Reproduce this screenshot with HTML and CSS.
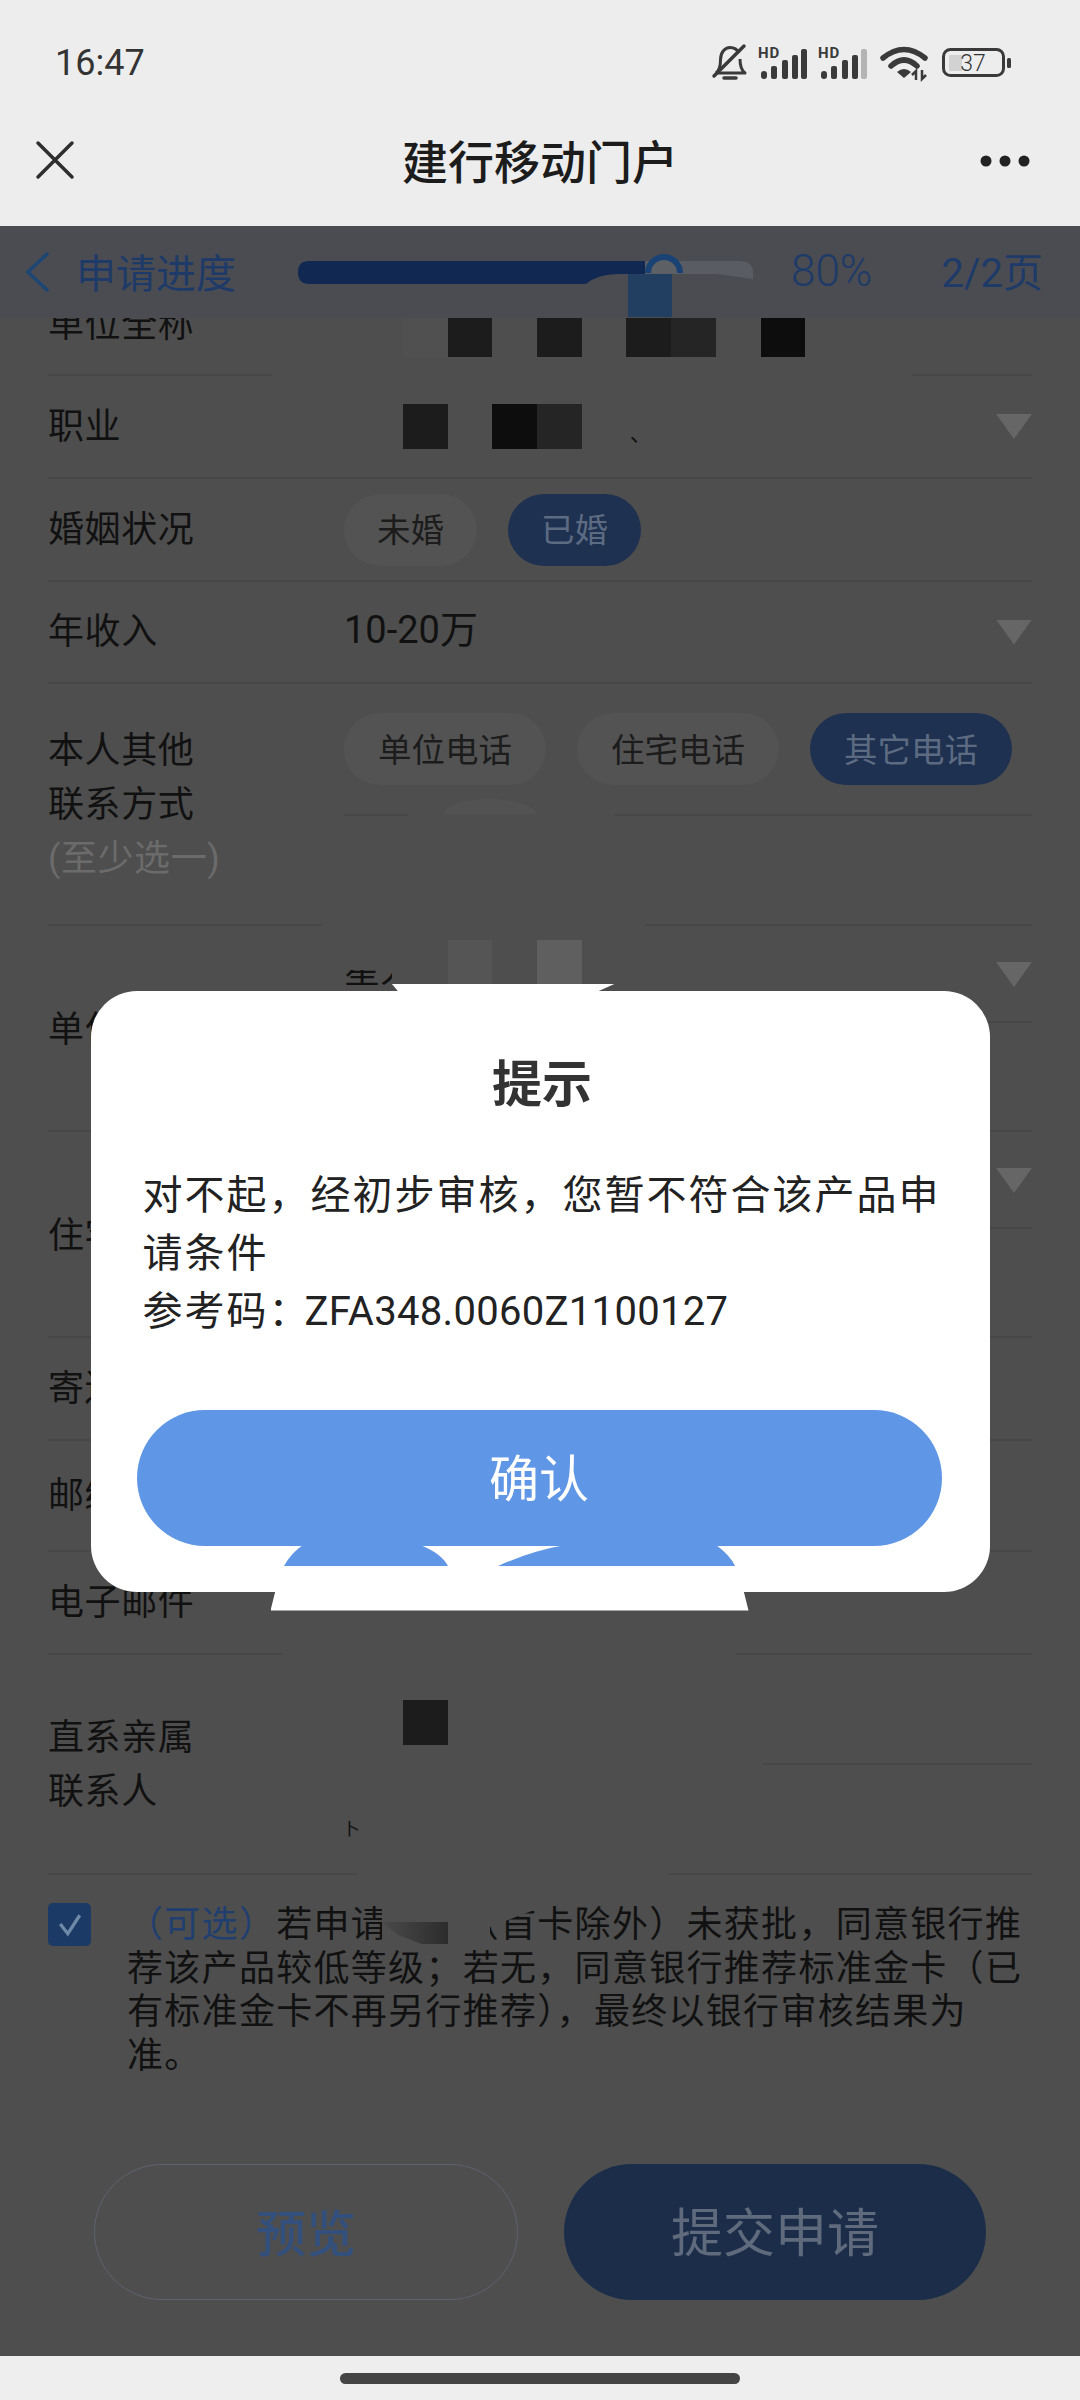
FILE: index.html
```html
<!DOCTYPE html>
<html lang="zh-CN">
	<head>
		<meta charset="UTF-8">
		<meta name="viewport" content="width=device-width, initial-scale=1.0">
		<title>建行移动门户</title>
		<link rel="stylesheet" href="styles.css">
	</head>

	<body>
		<header class="chrome">
			<div class="status">
				<span class="time">16:47</span>
				<div class="status-icons">
					<svg class="ic-bell" viewBox="0 0 36 38" width="36" height="38">
						<path d="M4 29C8 26 8.500 22 8.500 16C8.500 8 13 3.500 18 3.500C22 3.500 25 5 27 9M28 15C28 22 29 26 33 29H4" fill="none" stroke="#3a3a3a" stroke-width="3" stroke-linejoin="round"/>
						<path d="M2 32L32 2" stroke="#3a3a3a" stroke-width="3.500" stroke-linecap="round"/>
						<path d="M12 34H24" stroke="#3a3a3a" stroke-width="3.500" stroke-linecap="round"/>
					</svg>
					<svg class="ic-signal" viewBox="0 0 50 34" width="50" height="34">
						<text class="hd" x="0" y="12">HD</text>
						<rect x="3" y="25" width="6" height="8" rx="3" fill="#3a3a3a"/>
						<rect x="13" y="20" width="6" height="13" rx="2" fill="#3a3a3a"/>
						<rect x="24" y="14" width="6" height="19" rx="2" fill="#3a3a3a"/>
						<rect x="34" y="9" width="6" height="24" rx="2" fill="#3a3a3a"/>
						<rect x="43" y="3" width="6" height="30" rx="2" fill="#3a3a3a"/>
					</svg>
					<svg class="ic-signal" viewBox="0 0 50 34" width="50" height="34">
						<text class="hd" x="0" y="12">HD</text>
						<rect x="3" y="25" width="6" height="8" rx="3" fill="#3a3a3a"/>
						<rect x="13" y="20" width="6" height="13" rx="2" fill="#3a3a3a"/>
						<rect x="24" y="14" width="6" height="19" rx="2" fill="#3a3a3a"/>
						<rect x="34" y="9" width="6" height="24" rx="2" fill="#3a3a3a"/>
						<rect x="43" y="3" width="6" height="30" rx="2" fill="#b4b4b4"/>
					</svg>
					<svg class="ic-wifi" viewBox="0 0 46 34" width="46" height="34">
						<path d="M2 12Q23 -5 44 12M10 20Q23 8 36 20" fill="none" stroke="#3a3a3a" stroke-width="5.500" stroke-linecap="round"/>
						<path d="M16 26Q23 20 30 26L23 32Z" fill="#3a3a3a"/>
						<path d="M35 34V25L31 29M41 24V33L45 29" fill="none" stroke="#3a3a3a" stroke-width="2.500"/>
					</svg>
					<svg class="ic-battery" viewBox="0 0 70 30" width="70" height="30">
						<rect x="1.500" y="1.500" width="60" height="26" rx="7" fill="none" stroke="#3a3a3a" stroke-width="3"/>
						<rect x="7" y="7" width="13" height="16" fill="#d2d2d2"/>
						<text class="batt" x="31" y="23">37</text>
						<rect x="65" y="10" width="4" height="10" rx="1.500" fill="#3a3a3a"/>
					</svg>
				</div>
			</div>
			<nav class="topnav">
				<svg class="ic-close" viewBox="0 0 38 38" width="38" height="38">
					<path d="M2 2L36 36M36 2L2 36" stroke="#2e2e2e" stroke-width="3.500" stroke-linecap="round"/>
				</svg>
				<h1>建行移动门户</h1>
				<svg class="ic-more" viewBox="0 0 50 12" width="50" height="12">
					<circle cx="6" cy="6" r="5.500" fill="#222"/>
					<circle cx="25" cy="6" r="5.500" fill="#222"/>
					<circle cx="44" cy="6" r="5.500" fill="#222"/>
				</svg>
			</nav>
		</header>

		<main class="screen">
			<form class="apply">
				<div class="row row-first">
					<span class="label">单位全称</span>
					<div class="cell">
						<div class="tiles tiles-first">
							<i class="tile t-faint"></i><i class="tile t-dark"></i><i class="tile"></i><i class="tile t-dark"></i><i class="tile"></i><i class="tile t-dark"></i><i class="tile t-mid"></i><i class="tile"></i><i class="tile t-black"></i>
						</div>
					</div>
					<span class="cut cut-a"></span>
				</div>

				<div class="row">
					<span class="label">职业</span>
					<div class="cell">
						<div class="tiles">
							<i class="tile t-dark"></i><i class="tile"></i><i class="tile t-black"></i><i class="tile t-mid"></i>
						</div>
						<span class="speck">、</span>
						<span class="arrow"></span>
					</div>
				</div>

				<div class="row">
					<span class="label">婚姻状况</span>
					<div class="cell chips">
						<span class="chip">未婚</span>
						<span class="chip chip-on">已婚</span>
					</div>
				</div>

				<div class="row row-short">
					<span class="label">年收入</span>
					<div class="cell">
						<span class="value">10-20万</span>
						<span class="arrow"></span>
					</div>
				</div>

				<div class="row row-contact">
					<div class="label">
						本人其他<br>联系方式<br><span class="hint">(至少选一)</span>
					</div>
					<div class="cells">
						<div class="cell cell-contact chips chips-wide">
							<span class="chip">单位电话</span>
							<span class="chip">住宅电话</span>
							<span class="chip chip-on">其它电话</span>
							<span class="cut cut-b"></span>
							<span class="smudge"></span>
						</div>
						<div class="cell cell-free"></div>
					</div>
					<span class="cut cut-c"></span>
				</div>

				<div class="row row-double">
					<span class="label">单位地址</span>
					<div class="cells">
						<div class="cell cell-split">
							<span class="frag">星人</span>
							<div class="tiles tiles-up">
								<i class="tile"></i><i class="tile t-pale"></i><i class="tile"></i><i class="tile t-paler"></i>
							</div>
							<span class="arrow arrow-up"></span>
						</div>
						<div class="cell cell-free"></div>
					</div>
				</div>

				<div class="row row-double">
					<span class="label">住宅地址</span>
					<div class="cells">
						<div class="cell cell-split">
							<span class="arrow arrow-up"></span>
						</div>
						<div class="cell cell-free"></div>
					</div>
				</div>

				<div class="row">
					<span class="label">寄送地址</span>
				</div>

				<div class="row row-tall">
					<span class="label">邮编</span>
				</div>

				<div class="row">
					<span class="label">电子邮件</span>
					<span class="cut cut-d"></span>
				</div>

				<div class="row row-kin">
					<div class="label">直系亲属<br>联系人</div>
					<div class="cells">
						<div class="cell cell-free">
							<div class="tiles tiles-kin">
								<i class="tile t-dark"></i>
							</div>
							<span class="cut cut-e"></span>
						</div>
						<div class="cell cell-free"></div>
					</div>
					<span class="frag frag-kin">卜</span>
					<span class="cut cut-f"></span>
				</div>

				<div class="agree">
					<span class="checkbox">
						<svg viewBox="0 0 24 24" width="26" height="26">
							<path d="M3 11L10 20L21 3" fill="none" stroke="#6f89a8" stroke-width="3"/>
						</svg>
					</span>
					<p>
						<span class="opt">（可选）</span>若申请该卡（首卡除外）未获批，同意银行推荐该产品较低等级；若无，同意银行推荐标准金卡（已有标准金卡不再另行推荐），最终以银行审核结果为准。
					</p>
					<span class="text-cover"></span>
					<span class="text-smear"></span>
				</div>

				<div class="actions">
					<button type="button" class="btn btn-ghost">预览</button>
					<button type="button" class="btn btn-solid">提交申请</button>
				</div>
			</form>

			<div class="progress">
				<svg class="ic-back" viewBox="0 0 26 42" width="26" height="42">
					<path d="M23 2L3 21L23 40" fill="none" stroke="#1e4674" stroke-width="3.500"/>
				</svg>
				<span class="progress-title">申请进度</span>
				<svg class="progress-bar" viewBox="0 0 455 90" width="455" height="90">
					<path d="M347 34H440Q455 34 455 45V52L419 47H347Z" fill="#595d63"/>
					<path d="M11 34H347V47H320Q300 47 288 57H11Q0 57 0 45Q0 34 11 34Z" fill="#112852"/>
					<rect x="330" y="47" width="44" height="43" fill="#223e60"/>
					<path d="M350 46A16 16 0 0 1 382 46" fill="#5d6166" stroke="#1a4375" stroke-width="6"/>
				</svg>
				<span class="progress-num">80%</span>
				<span class="progress-page">2/2页</span>
			</div>

			<div class="overlay">
				<div class="modal">
					<span class="patch-top"></span>
					<h2>提示</h2>
					<p class="modal-text">对不起，经初步审核，您暂不符合该产品申请条件<br>参考码：<span class="code">ZFA348.0060Z1100127</span></p>
					<button type="button" class="confirm">确认</button>
					<svg class="bumps" viewBox="0 0 478 21" width="478" height="21">
						<path d="M32 0H149Q170 8 177 21H13Q20 8 32 0Z" fill="#6096e6"/>
						<path d="M294 0H445Q459 10 464 21H227Q260 6 294 0Z" fill="#6096e6"/>
					</svg>
					<span class="patch-bottom"></span>
				</div>
			</div>
		</main>

		<footer class="homebar">
			<span class="home-pill"></span>
		</footer>
	</body>
</html>
```

FILE: styles.css
```css
* {
	box-sizing: border-box;
}

html, body {
	margin: 0;
	padding: 0;
}

body {
	width: 1080px;
	height: 2400px;
	overflow: hidden;
	font-family: Roboto, "Noto Sans CJK SC", sans-serif;
	background-color: #ededed;
}

svg {
	overflow: visible;
}

/* top chrome */

.chrome {
	height: 226px;
	background-color: #ededed;
}

.status {
	height: 94px;
	padding: 32px 68px 0 55px;
	display: flex;
	justify-content: space-between;
	align-items: center;
}

.time {
	font-size: 36px;
	color: #333;
}

.status-icons {
	display: flex;
	align-items: center;
}

.ic-bell {
	margin-right: 10px;
}

.ic-signal {
	margin-right: 10px;
}

.ic-wifi {
	margin: 0 15px 0 3px;
}

.hd {
	font-size: 15px;
	font-weight: 700;
	letter-spacing: 1px;
	fill: #3a3a3a;
}

.batt {
	font-size: 23px;
	font-weight: 300;
	fill: #333;
	text-anchor: middle;
}

.topnav {
	height: 132px;
	padding: 0 50px 0 36px;
	display: flex;
	justify-content: space-between;
	align-items: center;
	position: relative;
}

.topnav h1 {
	position: absolute;
	left: 0;
	right: 0;
	top: 32px;
	margin: 0;
	text-align: center;
	font-size: 46px;
	font-weight: 500;
	color: #1c1c1c;
}

.ic-more {
	margin-top: 2px;
}

/* form behind the dialog */

.screen {
	height: 2130px;
	position: relative;
	overflow: hidden;
	background-color: #4e4e4e;
}

.apply {
	padding: 47px 48px 0;
}

.row {
	height: 103px;
	border-bottom: 2px solid #474747;
	display: grid;
	grid-template-columns: 296px 1fr;
	align-items: center;
	position: relative;
}

.row-first {
	align-items: start;
}

.row-first .label {
	margin-top: 25px;
}

.row-short {
	height: 102px;
}

.row-tall {
	height: 111px;
}

.row-contact {
	height: 242px;
}

.row-double {
	height: 206px;
}

.row-kin {
	height: 220px;
}

.label {
	font-size: 36px;
	letter-spacing: 0.6px;
	line-height: 54px;
	color: #111;
}

.hint {
	color: #6b6b6b;
}

.cell {
	display: flex;
	align-items: center;
	position: relative;
}

.cells {
	align-self: stretch;
}

.cell-contact {
	height: 132px;
	border-bottom: 2px solid #474747;
}

.cell-split {
	height: 97px;
	border-bottom: 2px solid #474747;
}

.cell-free {
	height: 110px;
}

.row-kin .cell-free:first-child {
	border-bottom: 2px solid #474747;
}

.value {
	font-size: 38px;
	line-height: 40px;
	margin-top: -4px;
	color: #111;
}

.arrow {
	margin-left: auto;
	width: 36px;
	height: 25px;
	background-color: #666;
	clip-path: polygon(0 0, 100% 0, 50% 100%);
}

.arrow-up {
	margin-top: 2px;
}

.tiles {
	padding-left: 59px;
	display: flex;
}

.tiles-first {
	margin-top: 39px;
}

.tiles-up {
	margin-bottom: 22px;
}

.tiles-kin {
	margin-top: 26px;
}

.tile {
	display: block;
	width: 44.700px;
	height: 45px;
}

.t-faint {
	background-color: #505050;
}

.t-dark {
	background-color: #1c1c1c;
}

.t-mid {
	background-color: #252525;
}

.t-black {
	background-color: #0d0d0d;
}

.t-pale {
	background-color: #555;
}

.t-paler {
	background-color: #5f5f5f;
}

.speck {
	font-size: 22px;
	color: #111;
	margin-left: 48px;
	margin-top: 8px;
}

.chips {
	gap: 31px;
}

.chip {
	height: 72px;
	padding: 0 33px 4px;
	border-radius: 36px;
	display: flex;
	align-items: center;
	font-size: 33.500px;
	color: #1c1c1c;
	background-color: #535353;
}

.chips-wide .chip {
	padding: 0 34px 4px;
}

.chip-on {
	color: #5c6b81;
	background-color: #1e3150;
}

/* places where the reference is wiped out */

.cut {
	position: absolute;
	height: 3px;
	background-color: #4e4e4e;
}

.cut-a {
	left: 224px;
	width: 640px;
	bottom: -2px;
}

.cut-b {
	left: 64px;
	width: 207px;
	bottom: -2px;
}

.cut-c {
	left: 274px;
	width: 323px;
	bottom: -2px;
}

.cut-d {
	left: 235px;
	width: 453px;
	bottom: -2px;
}

.cut-e {
	left: 0;
	width: 419px;
	bottom: -2px;
}

.cut-f {
	left: 309px;
	width: 311px;
	bottom: -2px;
}

.smudge {
	position: absolute;
	left: 100px;
	bottom: 0;
	width: 92px;
	height: 15px;
	background-color: #525252;
	clip-path: ellipse(50% 100% at 50% 100%);
}

.frag {
	position: absolute;
	left: 0;
	top: 44px;
	width: 48px;
	height: 19px;
	overflow: hidden;
	white-space: nowrap;
	font-size: 36px;
	line-height: 2px;
	color: #111;
}

.frag-kin {
	left: 294px;
	top: 166px;
	height: 16px;
	font-size: 18px;
	line-height: 16px;
}

/* agree text and buttons */

.agree {
	margin-top: 26px;
	display: flex;
	position: relative;
}

.checkbox {
	flex: none;
	width: 43px;
	height: 43px;
	margin: 2px 36px 0 0;
	border-radius: 5px;
	display: flex;
	align-items: center;
	justify-content: center;
	background-color: #1b3a66;
}

.agree p {
	margin: 3px 0 0;
	font-size: 36px;
	letter-spacing: 1.300px;
	line-height: 43.500px;
	color: #111;
}

.opt {
	color: #203f70;
}

.text-cover {
	position: absolute;
	left: 334px;
	top: 0;
	width: 155px;
	height: 47px;
	background-color: #4e4e4e;
	clip-path: polygon(0 0, 100% 0, 100% 8px, 108px 26px, 108px 100%, 0 100%);
}

.text-smear {
	position: absolute;
	left: 334px;
	top: 21px;
	width: 66px;
	height: 22px;
	background-image: linear-gradient(90deg, #4a4a4a, #2c2c2c);
	clip-path: polygon(0 0, 100% 0, 100% 100%, 60% 100%, 25% 60%);
}

.actions {
	margin: 86px 46px 0;
	display: flex;
	justify-content: space-between;
}

.btn {
	height: 136px;
	padding: 0 0 5px;
	border-radius: 68px;
	font-family: inherit;
}

.btn-ghost {
	width: 424px;
	font-size: 50px;
	font-weight: 500;
	color: #33507c;
	background-color: transparent;
	border: 1.500px solid #5d6270;
}

.btn-solid {
	width: 422px;
	font-size: 52px;
	color: #5f6a7c;
	background-color: #1c2d4a;
	border: none;
}

.progress {
	position: absolute;
	top: 0;
	left: 0;
	right: 0;
	height: 92px;
	padding: 0 37px 0 25px;
	display: flex;
	align-items: center;
	background-color: #4a4c52;
}

.progress-title {
	margin: -3px 62px 0 25px;
	font-size: 40px;
	color: #1e3a68;
}

.progress-num,
.progress-page {
	font-size: 40px;
	color: #1e3a68;
}

.progress-num {
	margin: -2px 0 0 38px;
	font-size: 44px;
	font-weight: 300;
}

.progress-page {
	margin: -5px 0 0 auto;
}

/* dialog */

.overlay {
	position: absolute;
	inset: 0;
	display: flex;
	align-items: center;
	justify-content: center;
}

.modal {
	width: 899px;
	height: 601px;
	padding: 64px 48px 0 52px;
	border-radius: 46px;
	position: relative;
	background-color: #fff;
}

.modal h2 {
	margin: 0 0 52px;
	text-align: center;
	font-size: 50px;
	font-weight: 700;
	line-height: 60px;
	color: #333;
}

.modal-text {
	margin: 0 0 69px;
	font-size: 40px;
	letter-spacing: 2px;
	line-height: 58px;
	color: #222;
}

.code {
	margin-left: -6px;
	letter-spacing: 0.300px;
}

.confirm {
	display: block;
	width: 805px;
	height: 136px;
	margin-left: -6px;
	padding: 0 0 6px;
	border: none;
	border-radius: 68px;
	font-family: inherit;
	font-size: 50px;
	color: #fff;
	background-color: #6096e6;
}

.bumps {
	position: absolute;
	left: 180px;
	top: 554px;
}

.patch-top {
	position: absolute;
	left: 301px;
	top: -7px;
	width: 224px;
	height: 8px;
	background-color: #fff;
	clip-path: polygon(0 0, 100% 0, 92% 100%, 3% 100%);
}

.patch-bottom {
	position: absolute;
	left: 180px;
	top: 100%;
	width: 478px;
	height: 19px;
	background-color: #fff;
	clip-path: polygon(1% 0, 99% 0, 100% 100%, 0 100%);
}

/* home indicator */

.homebar {
	height: 44px;
	padding-top: 17px;
	display: flex;
	justify-content: center;
	background-color: #eee;
}

.home-pill {
	width: 400px;
	height: 11px;
	border-radius: 6px;
	background-color: #444;
}
```
